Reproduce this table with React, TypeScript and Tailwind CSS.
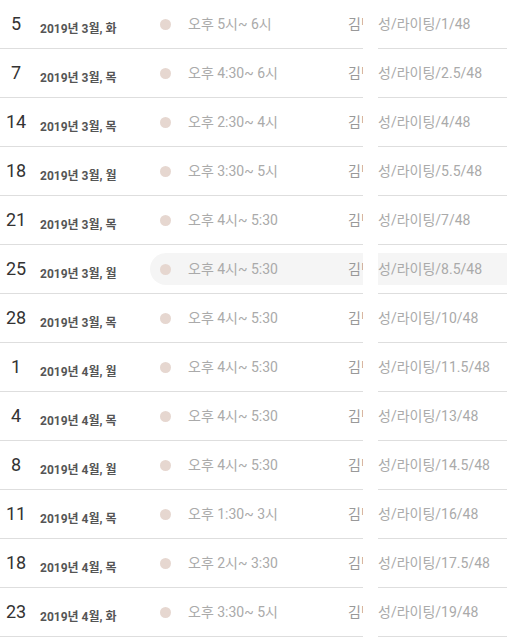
const rows = [
  { day: '5', month: '3월', wd: '화', time: '오후 5시~ 6시', n: '1' },
  { day: '7', month: '3월', wd: '목', time: '오후 4:30~ 6시', n: '2.5' },
  { day: '14', month: '3월', wd: '목', time: '오후 2:30~ 4시', n: '4' },
  { day: '18', month: '3월', wd: '월', time: '오후 3:30~ 5시', n: '5.5' },
  { day: '21', month: '3월', wd: '목', time: '오후 4시~ 5:30', n: '7' },
  { day: '25', month: '3월', wd: '월', time: '오후 4시~ 5:30', n: '8.5', active: true },
  { day: '28', month: '3월', wd: '목', time: '오후 4시~ 5:30', n: '10' },
  { day: '1', month: '4월', wd: '월', time: '오후 4시~ 5:30', n: '11.5' },
  { day: '4', month: '4월', wd: '목', time: '오후 4시~ 5:30', n: '13' },
  { day: '8', month: '4월', wd: '월', time: '오후 4시~ 5:30', n: '14.5' },
  { day: '11', month: '4월', wd: '목', time: '오후 1:30~ 3시', n: '16' },
  { day: '18', month: '4월', wd: '목', time: '오후 2시~ 3:30', n: '17.5' },
  { day: '23', month: '4월', wd: '화', time: '오후 3:30~ 5시', n: '19' },
];

function Row({ r }: { r: (typeof rows)[number] }) {
  return (
    <div className="flex">
      {/* left cell */}
      <div className="w-[363px] shrink-0 h-[49px] flex items-center border-b border-[#dedede] overflow-hidden">
        <div className="w-8 shrink-0 text-center text-[18px] leading-none text-[#333] -mt-[1px]">{r.day}</div>
        <div className="w-[118px] shrink-0 pl-2 mt-[9px] text-[12px] font-bold text-[#555] whitespace-nowrap">
          2019년 {r.month}, {r.wd}
        </div>
        <div
          className={`flex-1 h-8 flex items-center pl-[10px] rounded-l-full whitespace-nowrap ${
            r.active ? 'bg-[#f5f5f5]' : ''
          }`}
        >
          <span className="w-[11px] h-[11px] rounded-full bg-[#e6d7d0] shrink-0" />
          <span className="ml-[17px] w-[160px] shrink-0 text-[14px] text-[#aaa]">{r.time}</span>
          <span className="text-[14px] text-[#999]">김민</span>
        </div>
      </div>
      {/* right cell */}
      <div className="ml-[15px] flex-1 h-[49px] flex items-center border-b border-[#dedede] overflow-hidden">
        <div
          className={`w-full h-8 flex items-center whitespace-nowrap text-[14px] text-[#aaa] ${
            r.active ? 'bg-[#f5f5f5]' : ''
          }`}
        >
          성/라이팅/{r.n}/48
        </div>
      </div>
    </div>
  );
}

export default function App() {
  return (
    <div
      className="w-[507px] h-[642px] bg-white overflow-hidden"
      style={{ fontFamily: 'Roboto, "Noto Sans CJK KR", sans-serif' }}
    >
      {rows.map((r, i) => (
        <Row key={i} r={r} />
      ))}
    </div>
  );
}
